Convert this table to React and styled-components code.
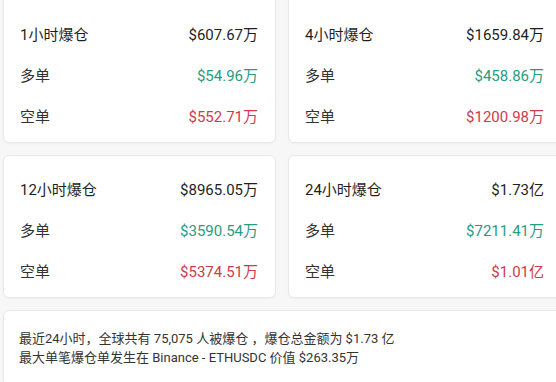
import React from 'react';
import styled, {createGlobalStyle} from 'styled-components';

const GlobalStyle = createGlobalStyle`
    html, body {
        margin: 0;
        padding: 0;
        background: #f7f7f7;
        overflow: hidden;
    }
    body {
        font-family: Roboto, "Noto Sans CJK SC", sans-serif;
    }
`

const cards = [
    {title: '1小时爆仓', total: '$607.67万', long: '$54.96万', short: '$552.71万'},
    {title: '4小时爆仓', total: '$1659.84万', long: '$458.86万', short: '$1200.98万'},
    {title: '12小时爆仓', total: '$8965.05万', long: '$3590.54万', short: '$5374.51万'},
    {title: '24小时爆仓', total: '$1.73亿', long: '$7211.41万', short: '$1.01亿'},
]

// the top of the first row sits above the frame
const Page = styled.div`
    width: 580px;
    height: 388px;
    margin-top: -6px;
    padding: 0 0 0 3px;
    display: flex;
    flex-direction: column;
    gap: 12px;
    overflow: hidden;
`

const Grid = styled.div`
    display: grid;
    grid-template-columns: 273px 274px;
    gap: 12px;
`

const Card = styled.div`
    background: #fff;
    border: 1px solid #e8e8e8;
    border-radius: 6px;
    box-shadow: 0 1px 2px rgba(0, 0, 0, 0.04);
`

const StatCard = styled(Card)`
    height: ${p => p.$first ? 149 : 143}px;
    box-sizing: border-box;
    padding: ${p => p.$first ? 18 : 12}px 17px 0 16px;
`

const Row = styled.div`
    display: flex;
    justify-content: space-between;
    align-items: center;
    height: 41px;
    font-size: 15px;
`

const Label = styled.span`
    color: ${p => p.$title ? '#1f1f1f' : '#333'};
`

const Value = styled.span`
    color: ${p => p.$color || '#1f1f1f'};
`

const Summary = styled(Card)`
    flex: 1;
    padding: 18px 15px;
    font-size: 13px;
    line-height: 19px;
    color: #333;
`

const StatBox = ({item, first}) => {
    return (
        <StatCard $first={first}>
            <Row>
                <Label $title>{item.title}</Label>
                <Value>{item.total}</Value>
            </Row>
            <Row>
                <Label>多单</Label>
                <Value $color="#279c7f">{item.long}</Value>
            </Row>
            <Row>
                <Label>空单</Label>
                <Value $color="#cf3a4c">{item.short}</Value>
            </Row>
        </StatCard>
    )
}

export default function App() {
    return (
        <Page>
            <GlobalStyle />
            <Grid>
                {cards.map((c, i) => <StatBox key={i} item={c} first={i < 2} />)}
            </Grid>
            <Summary>
                <div>最近24小时，全球共有 75,075 人被爆仓 ，爆仓总金额为 $1.73 亿</div>
                <div>最大单笔爆仓单发生在 Binance - ETHUSDC 价值 $263.35万</div>
            </Summary>
        </Page>
    )
}
